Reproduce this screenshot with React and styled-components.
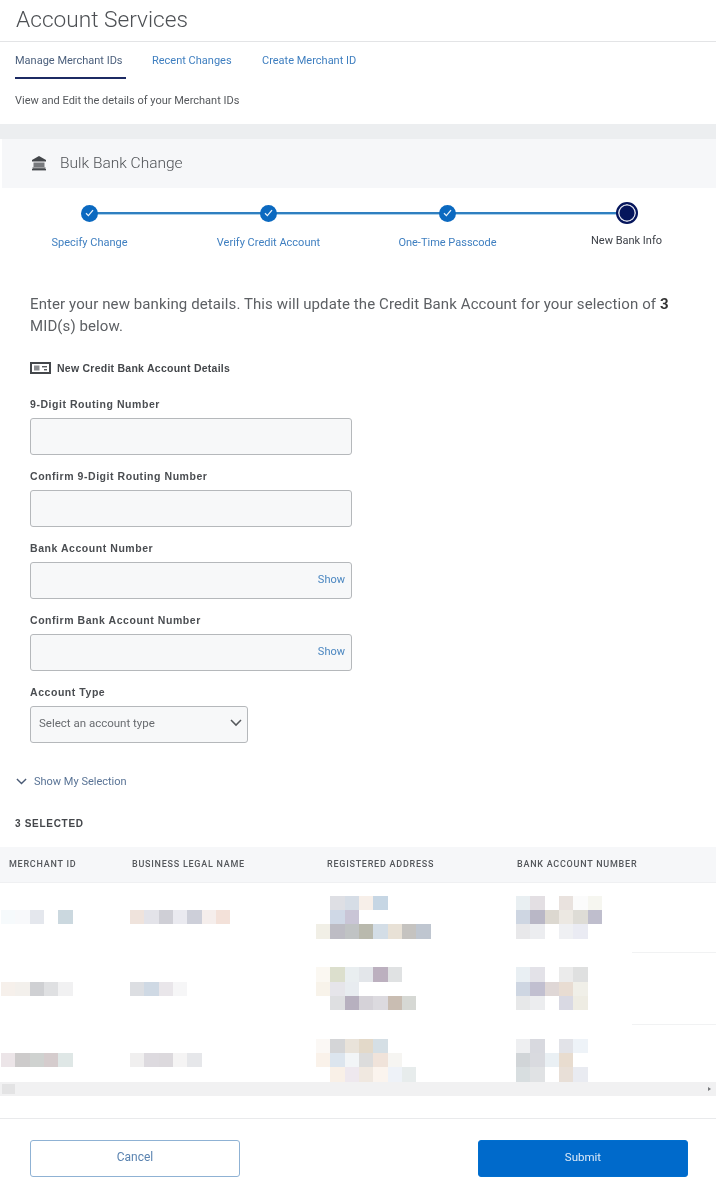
import React from "react";
import styled, { createGlobalStyle } from "styled-components";

const GlobalStyle = createGlobalStyle`
  html, body {
    margin: 0;
    padding: 0;
    background: #fff;
  }
  body {
    font-family: "Roboto", "Liberation Sans", sans-serif;
    color: #53565a;
  }
  * {
    box-sizing: border-box;
  }
`;

const Page = styled.div`
  width: 716px;
  height: 1197px;
  overflow: hidden;
  filter: blur(0.4px);
`;

const TitleBar = styled.header`
  height: 42px;
  padding: 7px 0 0 16px;
  border-bottom: 1.5px solid #e3e4e6;
`;

const Title = styled.h1`
  margin: 0;
  font-size: 22.7px;
  line-height: 26px;
  font-weight: 300;
  color: #4d5054;
`;

const Tabs = styled.nav`
  display: flex;
  gap: 26px;
  height: 37px;
  padding-left: 15px;
`;

const Tab = styled.a`
  display: block;
  height: 37px;
  padding-top: 12px;
  width: ${(p) => p.$width}px;
  font-size: 11px;
  line-height: 14px;
  white-space: nowrap;
  color: ${(p) => (p.$active ? "#4b5f7c" : "#3f7fc0")};
  border-bottom: ${(p) => (p.$active ? "2.5px solid #1c2a63" : "none")};
`;

const Intro = styled.p`
  margin: 0;
  height: 45px;
  padding: 15px 0 0 15px;
  font-size: 11px;
  line-height: 14px;
  color: #55585c;
`;

const Band = styled.div`
  height: 15px;
  background: #eceef0;
`;

const SectionHead = styled.div`
  display: flex;
  align-items: center;
  gap: 13px;
  height: 49px;
  margin-left: 2px;
  padding: 0 0 1px 29px;
  background: #f6f7f9;
  font-size: 15.5px;
  font-weight: 300;
  color: #4f5256;
`;

const Stepper = styled.ol`
  display: grid;
  grid-template-columns: repeat(4, 179px);
  margin: 0;
  padding: 13.5px 0 0;
  height: 105px;
  list-style: none;
`;

const Step = styled.li`
  position: relative;
  display: flex;
  flex-direction: column;
  align-items: center;
  font-size: 11px;
  line-height: 14px;
  color: ${(p) => (p.$current ? "#3d4148" : "#3f7fc0")};

  &:not(:last-child)::after {
    content: "";
    position: absolute;
    top: 10.25px;
    left: 50%;
    width: 179px;
    height: 2px;
    background: #2f7fc0;
    box-shadow: 0 1px 0 #a9cfe9;
  }
`;

const Dot = styled.span`
  position: relative;
  z-index: 1;
  display: flex;
  align-items: center;
  justify-content: center;
  width: 17px;
  height: 17px;
  margin: 3px 0 14px;
  border-radius: 50%;
  background: #0b69c0;
`;

const CurrentDot = styled.span`
  position: relative;
  z-index: 1;
  width: 22px;
  height: 22px;
  margin: 0 0 10px;
  border-radius: 50%;
  background: #05155c;
  border: 2px solid #05155c;
  box-shadow: inset 0 0 0 1.5px #d8dce8;
`;

const Form = styled.form`
  padding: 0 0 0 30px;
`;

const Lead = styled.p`
  margin: 0;
  width: 660px;
  font-size: 15px;
  line-height: 22px;
  letter-spacing: 0.1px;
  color: #5d6064;

  strong {
    color: #333;
  }
`;

const DetailsHead = styled.div`
  display: flex;
  align-items: center;
  gap: 6px;
  height: 16px;
  margin-top: 23px;
  font-family: "Liberation Sans", sans-serif;
  font-size: 10.5px;
  font-weight: 700;
  letter-spacing: 0.25px;
  color: #44474b;
`;

const Fields = styled.div`
  display: flex;
  flex-direction: column;
  gap: 14.5px;
  margin-top: 21px;
`;

const Field = styled.div`
  display: flex;
  flex-direction: column;
  gap: 5.5px;
`;

const Label = styled.label`
  font-family: "Liberation Sans", sans-serif;
  font-size: 10.5px;
  line-height: 15px;
  height: 15px;
  font-weight: 700;
  letter-spacing: 0.55px;
  color: #4a4d51;
`;

const InputWrap = styled.div`
  position: relative;
  width: 322px;
  height: 37px;
`;

const Input = styled.input`
  display: block;
  width: 100%;
  height: 100%;
  padding: 0 8px;
  border: 1.5px solid #b5b8bb;
  border-radius: 3px;
  background: #f7f8f9;
  outline: none;
`;

const ShowLink = styled.span`
  position: absolute;
  top: 11px;
  right: 7px;
  font-size: 11px;
  line-height: 14px;
  color: #4a86c0;
`;

const Select = styled.div`
  display: flex;
  align-items: center;
  justify-content: space-between;
  width: 218px;
  height: 37px;
  padding: 0 5px 2px 8px;
  border: 1.5px solid #b5b8bb;
  border-radius: 3px;
  background: #f7f8f9;
  font-size: 11.5px;
  color: #696c70;
`;

const Disclosure = styled.div`
  display: flex;
  align-items: center;
  gap: 7px;
  height: 16px;
  margin: 31px 0 0 16px;
  font-size: 11px;
  color: #5a7496;
`;

const SelectedCount = styled.div`
  height: 14px;
  margin: 27px 0 0 15px;
  font-family: "Liberation Sans", sans-serif;
  font-size: 10px;
  line-height: 14px;
  font-weight: 700;
  letter-spacing: 0.7px;
  color: #44474b;
`;

const Table = styled.div`
  margin-top: 16px;
`;

const HeadRow = styled.div`
  display: grid;
  grid-template-columns: 132px 195px 190px 199px;
  height: 36px;
  align-items: center;
  background: #f6f7f9;
  border-bottom: 1px solid #eff0f2;
`;

const HeadCell = styled.div`
  padding-left: ${(p) => p.$inset || 0}px;
  font-size: 9px;
  font-weight: 500;
  letter-spacing: 0.75px;
  white-space: nowrap;
  color: #54575b;
`;

const Body = styled.div`
  height: 200px;
  margin-top: -1px;
  overflow: hidden;
`;

const Row = styled.div`
  display: grid;
  grid-template-columns: 130px 186px 200px 116px 84px;
  height: 71.5px;
  align-items: center;
`;

const Rule = styled.div`
  align-self: end;
  height: 1px;
  background: #f1f2f3;
`;

const Mosaic = styled.div`
  display: grid;
  grid-template-columns: repeat(${(p) => p.$cols}, 14.33px);
  grid-auto-rows: 14.33px;
  margin-left: ${(p) => p.$inset || 0}px;
`;

const Tile = styled.span`
  background: ${(p) => p.$color || "transparent"};
`;

const Scrollbar = styled.div`
  display: flex;
  align-items: center;
  justify-content: space-between;
  height: 14px;
  padding: 0 5px 0 2px;
  background: #f1f1f2;
`;

const Thumb = styled.span`
  width: 13px;
  height: 10px;
  background: #e3e3e4;
`;

const ArrowRight = styled.span`
  width: 0;
  height: 0;
  border-top: 2.5px solid transparent;
  border-bottom: 2.5px solid transparent;
  border-left: 3px solid #77797c;
`;

const Footer = styled.footer`
  display: flex;
  justify-content: space-between;
  height: 80px;
  margin-top: 22px;
  padding: 21px 28px 0 30px;
  border-top: 1.5px solid #e9eaec;
`;

const Button = styled.button`
  width: 210px;
  height: 37px;
  padding: 0 0 2px;
  border-radius: 3px;
  border: 1.5px solid ${(p) => (p.$primary ? "#006fcf" : "#8fb2d4")};
  background: ${(p) => (p.$primary ? "#006acb" : "#fff")};
  color: ${(p) => (p.$primary ? "#dceaf8" : "#5a83b0")};
  font-family: inherit;
  font-size: ${(p) => (p.$primary ? 11.5 : 12)}px;
`;

const BankIcon = () => (
  <svg width="16" height="16" viewBox="0 0 16 16" fill="#44474b">
    <path d="M8 1 L15 5 V6.5 H1 V5 Z" />
    <rect x="2.5" y="7.5" width="11" height="4.5" fill="#77797d" />
    <rect x="1.5" y="12.5" width="13" height="1.3" />
    <rect x="1" y="14" width="14" height="1.4" />
  </svg>
);

const CardIcon = () => (
  <svg width="21" height="12" viewBox="0 0 21 12" fill="none">
    <rect x="1" y="1" width="19" height="10" stroke="#44474b" strokeWidth="2" />
    <rect x="4" y="3.5" width="5.5" height="5" fill="#8a8c90" />
    <rect x="12" y="4" width="5" height="1.4" fill="#55585c" />
    <rect x="14" y="7" width="3" height="1.4" fill="#55585c" />
  </svg>
);

const Check = () => (
  <svg width="9" height="8" viewBox="0 0 9 8" fill="none">
    <path d="M1 4.2 L3.4 6.6 L8 1.2" stroke="#e8f2fb" strokeWidth="1.3" />
  </svg>
);

const Chevron = ({ size = 12, color = "#55585c" }) => (
  <svg width={size} height={size * 0.6} viewBox="0 0 12 7" fill="none">
    <path d="M1 1 L6 6 L11 1" stroke={color} strokeWidth="1.5" />
  </svg>
);

const steps = ["Specify Change", "Verify Credit Account", "One-Time Passcode"];

const fields = [
  { label: "9-Digit Routing Number" },
  { label: "Confirm 9-Digit Routing Number" },
  { label: "Bank Account Number", show: true },
  { label: "Confirm Bank Account Number", show: true },
];

const _ = null;

// censored table cells, one colour per blurred block
const rows = [
  {
    merchant: [["#f6fafc", "#f8f9fb", "#e4e7ed", _, "#cbd8df"]],
    name: [["#efe3dc", "#e3e3e9", "#cfcfd6", "#eaeaf0", "#cdcfd9", "#f5eeec", "#f3e1d9"]],
    address: [
      [_, "#dedfe4", "#d6dde6", "#f7efe9", "#c6d6e4", _, _, _],
      [_, "#cfd8e6", "#c9c5d6", _, _, _, _, _],
      ["#f1efe6", "#bdbcc4", "#c0c3c4", "#b9b9ad", "#d3dde6", "#e8e1d6", "#c5c3c0", "#bfc6d0"],
    ],
    bank: [
      ["#e9eff2", "#e3dfe3", _, "#e9e2de", "#fbfbfb", "#f6f6f0"],
      ["#ced6e2", "#b9b7c6", "#dcd8d0", "#ece8e2", "#dedcd6", "#bfbecd"],
      ["#e8e8ea", "#ecedf0", _, "#eff0f3", "#eaebf3", _],
    ],
  },
  {
    merchant: [["#f6f0eb", "#f3f0ec", "#cfd0d3", "#dfe0e2", "#f1f1f2"]],
    name: [["#dcdee2", "#cfd9e4", "#e9e6ea", "#f6f6f7", _, _, _]],
    address: [
      ["#fbf8f2", "#dcdfcd", "#e9eef0", "#e3e6ea", "#bcb0bf", "#e0e2e3", _, _],
      ["#f8f3ea", "#e6e5ea", "#e8ecf0", _, _, _, _, _],
      [_, "#dedfe1", "#b7b0bf", "#d5d2d8", "#dcdadf", "#c9bdb2", "#d6d8d4", _],
    ],
    bank: [
      ["#e9eff3", "#e3e2e8", _, "#ebebeb", "#dfe0e0", _],
      ["#ced6e2", "#c1bfd0", "#dfd7d6", "#e8dcd2", "#f0efe8", _],
      ["#e7e8e9", "#ecedef", _, "#d9d9e3", "#eeece3", _],
    ],
  },
  {
    merchant: [["#ece5e8", "#cdcbcb", "#cfd2d0", "#d5cccd", "#dfe7e6"]],
    name: [["#f0efef", "#dddadf", "#dcd9dd", "#f5f4f4", "#e6e7ea", _, _]],
    address: [
      ["#fbf8f5", "#d4d5d7", "#e9e3da", "#e3d9c9", "#d5dfe5", _, _, _],
      ["#faf2ea", "#dce5ee", "#f2f5f7", "#dcdcdc", "#f0e3da", "#f6f5f2", _, _],
      [_, "#f9f0e7", "#eee8ee", "#f0e8e0", "#fbf4ee", "#eef2f8", "#e7ecec", _],
    ],
    bank: [
      ["#eeeff1", "#d8d9df", _, "#e2e3e8", "#eef3f8", _],
      ["#d1d5d8", "#d9dadf", "#eaf0f4", "#e8dccf", _, _],
      ["#d8dee0", "#e0e2e4", _, "#e8dfd7", "#e9ebf1", _],
    ],
  },
];

const Blurred = ({ lines, inset }) => (
  <Mosaic $cols={lines[0].length} $inset={inset}>
    {lines.flat().map((color, i) => (
      <Tile key={i} $color={color} />
    ))}
  </Mosaic>
);

export default function App() {
  return (
    <Page>
      <GlobalStyle />
      <TitleBar>
        <Title>Account Services</Title>
      </TitleBar>
      <Tabs>
        <Tab $active $width={111}>Manage Merchant IDs</Tab>
        <Tab $width={84}>Recent Changes</Tab>
        <Tab>Create Merchant ID</Tab>
      </Tabs>
      <Intro>View and Edit the details of your Merchant IDs</Intro>
      <Band />
      <SectionHead>
        <BankIcon />
        Bulk Bank Change
      </SectionHead>
      <Stepper>
        {steps.map((step) => (
          <Step key={step}>
            <Dot><Check /></Dot>
            {step}
          </Step>
        ))}
        <Step $current>
          <CurrentDot />
          New Bank Info
        </Step>
      </Stepper>
      <Form>
        <Lead>
          Enter your new banking details. This will update the Credit Bank Account for your selection of <strong>3</strong> MID(s) below.
        </Lead>
        <DetailsHead>
          <CardIcon />
          New Credit Bank Account Details
        </DetailsHead>
        <Fields>
          {fields.map((field) => (
            <Field key={field.label}>
              <Label>{field.label}</Label>
              <InputWrap>
                <Input />
                {field.show && <ShowLink>Show</ShowLink>}
              </InputWrap>
            </Field>
          ))}
          <Field>
            <Label>Account Type</Label>
            <Select>
              Select an account type
              <Chevron />
            </Select>
          </Field>
        </Fields>
      </Form>
      <Disclosure>
        <Chevron size={11} color="#4a5a75" />
        Show My Selection
      </Disclosure>
      <SelectedCount>3 SELECTED</SelectedCount>
      <Table>
        <HeadRow>
          <HeadCell $inset={9}>MERCHANT ID</HeadCell>
          <HeadCell>BUSINESS LEGAL NAME</HeadCell>
          <HeadCell>REGISTERED ADDRESS</HeadCell>
          <HeadCell>BANK ACCOUNT NUMBER</HeadCell>
        </HeadRow>
        <Body>
          {rows.map((row, i) => (
            <Row key={i}>
              <Blurred lines={row.merchant} inset={1} />
              <Blurred lines={row.name} />
              <Blurred lines={row.address} />
              <Blurred lines={row.bank} />
              {i < 2 ? <Rule /> : <span />}
            </Row>
          ))}
        </Body>
        <Scrollbar>
          <Thumb />
          <ArrowRight />
        </Scrollbar>
      </Table>
      <Footer>
        <Button type="button">Cancel</Button>
        <Button type="button" $primary>Submit</Button>
      </Footer>
    </Page>
  );
}
